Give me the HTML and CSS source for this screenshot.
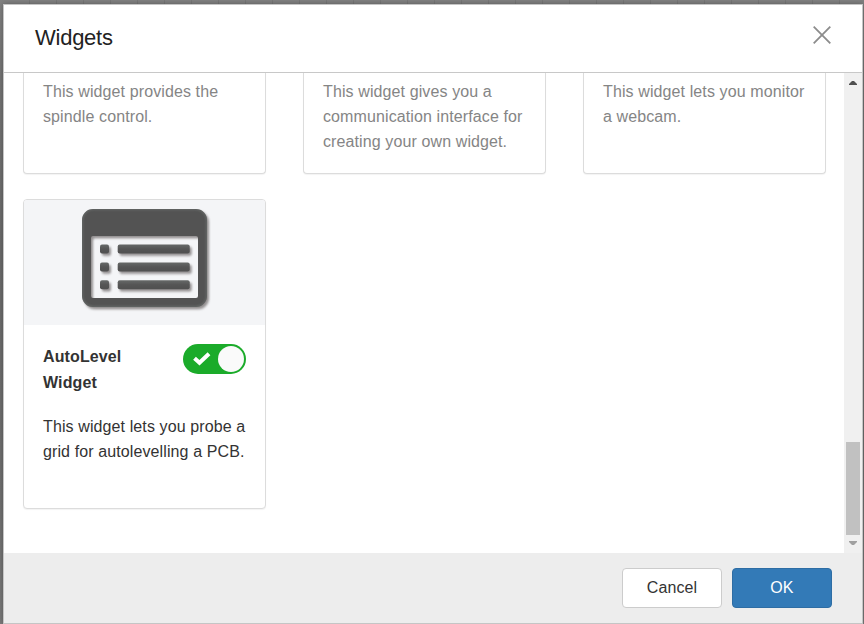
FILE: index.html
```
<!DOCTYPE html>
<html lang="en">
<head>
<meta charset="utf-8">
<title>Widgets</title>
<link rel="stylesheet" href="styles.css">
</head>
<body>
<div class="modal">
  <header class="modal-header">
    <h1 class="modal-title">Widgets</h1>
    <svg class="close" width="18" height="18" viewBox="0 0 18 18"><path d="M.7.7l16.6 16.6M17.3.7L.7 17.3"/></svg>
  </header>
  <div class="modal-body">
    <div class="grid">
      <section class="card card-cut disabled"><p class="desc">This widget provides the spindle control.</p></section>
      <section class="card card-cut disabled"><p class="desc">This widget gives you a communication interface for creating your own widget.</p></section>
      <section class="card card-cut disabled"><p class="desc">This widget lets you monitor a webcam.</p></section>
      <section class="card">
        <div class="preview">
          <svg class="preview-icon" width="136" height="112" viewBox="0 0 136 112">
            <defs>
              <linearGradient id="bar" x1="0" y1="0" x2="0" y2="1"><stop offset="0" stop-color="#666968"/><stop offset=".5" stop-color="#555"/><stop offset="1" stop-color="#505050"/></linearGradient>
              <filter id="shade" x="-10%" y="-10%" width="125%" height="125%" color-interpolation-filters="sRGB"><feDropShadow dx="2" dy="2.3" stdDeviation="1.2" flood-color="#544c4c" flood-opacity=".6"/></filter>
              <filter id="soft"><feGaussianBlur stdDeviation="1.3"/></filter>
              <clipPath id="edge"><rect x="4" y="4" width="125" height="98" rx="11"/></clipPath>
            </defs>
            <g filter="url(#shade)">
              <path fill="#535353" fill-rule="evenodd" d="M15 4h103a11 11 0 0 1 11 11v76a11 11 0 0 1-11 11H15A11 11 0 0 1 4 91V15A11 11 0 0 1 15 4zM15 31a2 2 0 0 0-2 2v58a2 2 0 0 0 2 2h103a2 2 0 0 0 2-2V33a2 2 0 0 0-2-2z"/>
              <g fill="url(#bar)">
                <rect x="22" y="39.5" width="9" height="9" rx="2"/><rect x="39.7" y="39.5" width="72" height="9" rx="2"/>
                <rect x="22" y="57.5" width="9" height="9" rx="2"/><rect x="39.7" y="57.5" width="72" height="9" rx="2"/>
                <rect x="22" y="75.3" width="9" height="9" rx="2"/><rect x="39.7" y="75.3" width="72" height="9" rx="2"/>
              </g>
            </g>
            <rect x="4" y="4" width="125" height="98" rx="11" fill="none" stroke="#747b78" stroke-width="2" filter="url(#soft)" clip-path="url(#edge)" opacity=".6"/>
          </svg>
        </div>
        <div class="content">
          <div class="heading">
            <h2 class="name">AutoLevel Widget</h2>
            <div class="toggle">
              <svg width="18" height="14" viewBox="0 0 18 14"><path d="M1.5 6.2l5 4.6L16 1.7" fill="none" stroke="#fff" stroke-width="4"/></svg>
              <span class="knob"></span>
            </div>
          </div>
          <p class="desc">This widget lets you probe a grid for autolevelling a PCB.</p>
        </div>
      </section>
    </div>
    <div class="scrollbar">
      <svg width="8" height="4" viewBox="0 0 8 4"><path d="M0 4V3l3-3h2l3 3v1z" fill="#505050"/></svg>
      <div class="thumb"></div>
      <svg width="8" height="4" viewBox="0 0 8 4"><path d="M0 0v1l3 3h2l3-3V0z" fill="#a0a0a0"/></svg>
    </div>
  </div>
  <footer class="modal-footer">
    <button class="btn">Cancel</button>
    <button class="btn btn-primary">OK</button>
  </footer>
</div>
</body>
</html>
```
FILE: styles.css
```
* { box-sizing: border-box; }
html, body { height: 100%; margin: 0; overflow: hidden; }
body {
  padding: 4px 1px 0 3px;
  background: repeating-linear-gradient(90deg, transparent 0 26px, rgba(0,0,0,.08) 26px 27px) 3px 0 / 100% 4px no-repeat,
    linear-gradient(#808080 0 4px, #747474 80px, #6b6b6b 40%, #707070 80%, #7a7a7a);
  color: #333;
  font: 16px/25px "Liberation Sans", Arial, sans-serif;
}
.modal {
  display: flex;
  flex-direction: column;
  height: 620px;
  border: 1px solid #c5c5c5;
  background: #fff;
  box-shadow: 0 0 5px rgba(0,0,0,.3);
}
.modal-header {
  display: flex;
  justify-content: space-between;
  align-items: center;
  height: 68px;
  padding: 0 31px 1px;
  border-bottom: 1px solid #c8c8c8;
}
.modal-title { margin: 0; color: #222; font-size: 22px; font-weight: 400; line-height: 30px; letter-spacing: -.25px; }
.close { margin-bottom: 6px; fill: none; stroke: #8c8c8c; stroke-width: 1.8; }
.modal-body { display: flex; height: 480px; overflow: hidden; }
.grid {
  flex: 1;
  display: grid;
  grid-template-columns: repeat(3, 243px);
  grid-template-rows: 101px 310px;
  gap: 25px 37px;
  padding-left: 19px;
}
.card {
  overflow: hidden;
  border: 1px solid #dcdcdc;
  border-radius: 4px;
  background: #fff;
  box-shadow: 0 1px 1px rgba(0,0,0,.05);
}
.card-cut { padding: 6px 18px 6px 19px; border-top: 0; border-radius: 0 0 4px 4px; }
.disabled { color: #858585; }
.desc { margin: 0; letter-spacing: .11px; }
.preview { display: flex; justify-content: center; height: 125px; padding: 5px 0 0 2px; background: #f4f5f7; }
.content { padding: 19px 19px 0; }
.heading { display: flex; justify-content: space-between; margin-bottom: 18px; }
.name { width: 110px; margin: 0; font-size: 16px; line-height: 26px; letter-spacing: .12px; }
.toggle {
  display: flex;
  justify-content: space-between;
  align-items: center;
  width: 63px;
  height: 30px;
  padding: 0 2px 0 10px;
  border-radius: 15px;
  background: #1bab2a;
}
.knob { width: 26px; height: 26px; border-radius: 50%; background: #fafafa; }
.scrollbar {
  display: flex;
  flex-direction: column;
  align-items: center;
  width: 18px;
  padding: 8px 0;
  background: #f0f0f0;
}
.thumb { width: 14px; height: 93px; margin: auto 0 6px; background: #c1c1c1; }
.modal-footer {
  flex: 1;
  display: flex;
  justify-content: flex-end;
  gap: 10px;
  padding: 15px 30px;
  background: #ededed;
}
.btn {
  width: 100px;
  height: 40px;
  padding: 0 0 2px;
  border: 1px solid #ccc;
  border-radius: 4px;
  background: #fff;
  color: #333;
  font: inherit;
  letter-spacing: .1px;
}
.btn-primary { border-color: #2e6da4; background: #337ab7; color: #fff; }
```
